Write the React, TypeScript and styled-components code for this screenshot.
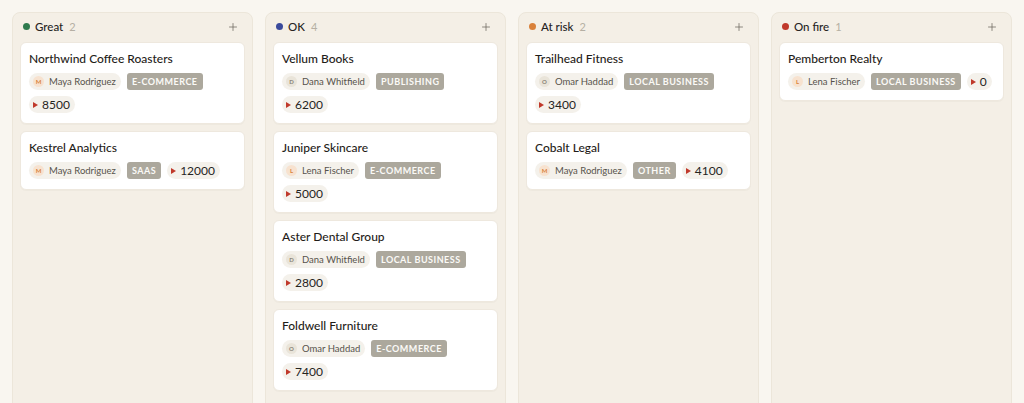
import React from 'react';
import styled, { createGlobalStyle } from 'styled-components';
import { Plus } from 'lucide-react';

type Owner = 'Maya Rodriguez' | 'Dana Whitfield' | 'Lena Fischer' | 'Omar Haddad';

type Deal = {
  name: string;
  owner: Owner;
  tag: string;
  value: number;
};

type Lane = {
  title: string;
  color: string;
  deals: Deal[];
};

const ownerTones: Record<Owner, { bg: string; fg: string }> = {
  'Maya Rodriguez': { bg: '#f7e2cf', fg: '#d9823b' },
  'Lena Fischer': { bg: '#f7e2cf', fg: '#d9823b' },
  'Dana Whitfield': { bg: '#e9e4d9', fg: '#8a8577' },
  'Omar Haddad': { bg: '#e9e4d9', fg: '#8a8577' },
};

const lanes: Lane[] = [
  {
    title: 'Great',
    color: '#2f7a4d',
    deals: [
      { name: 'Northwind Coffee Roasters', owner: 'Maya Rodriguez', tag: 'E-commerce', value: 8500 },
      { name: 'Kestrel Analytics', owner: 'Maya Rodriguez', tag: 'SaaS', value: 12000 },
    ],
  },
  {
    title: 'OK',
    color: '#3a4a9c',
    deals: [
      { name: 'Vellum Books', owner: 'Dana Whitfield', tag: 'Publishing', value: 6200 },
      { name: 'Juniper Skincare', owner: 'Lena Fischer', tag: 'E-commerce', value: 5000 },
      { name: 'Aster Dental Group', owner: 'Dana Whitfield', tag: 'Local business', value: 2800 },
      { name: 'Foldwell Furniture', owner: 'Omar Haddad', tag: 'E-commerce', value: 7400 },
    ],
  },
  {
    title: 'At risk',
    color: '#d9813a',
    deals: [
      { name: 'Trailhead Fitness', owner: 'Omar Haddad', tag: 'Local business', value: 3400 },
      { name: 'Cobalt Legal', owner: 'Maya Rodriguez', tag: 'Other', value: 4100 },
    ],
  },
  {
    title: 'On fire',
    color: '#c0392b',
    deals: [{ name: 'Pemberton Realty', owner: 'Lena Fischer', tag: 'Local business', value: 0 }],
  },
];

const GlobalStyle = createGlobalStyle`
  html, body {
    margin: 0;
    height: 100%;
    overflow: hidden;
    background: #f9f6f0;
    font-family: Lato, "Noto Sans", sans-serif;
    color: #26241f;
  }
  * { box-sizing: border-box; }
`;

const Board = styled.div`
  display: grid;
  grid-template-columns: repeat(4, 1fr);
  gap: 12px;
  padding: 12px 12px 0;
`;

const Column = styled.section`
  min-height: 420px;
  background: #f4efe6;
  border: 1px solid #ece6da;
  border-radius: 8px;
  padding: 0 7px 8px;
  display: flex;
  flex-direction: column;
`;

const Header = styled.div`
  display: flex;
  align-items: center;
  height: 27px;
  padding: 0 6px 0 3px;
  margin-bottom: 2px;
`;

const Dot = styled.span<{ color: string }>`
  width: 7px;
  height: 7px;
  border-radius: 50%;
  background: ${(p) => p.color};
  margin-right: 5px;
`;

const LaneTitle = styled.span`
  font-size: 11.5px;
  font-weight: 500;
  color: #26241f;
`;

const Count = styled.span`
  font-size: 11px;
  color: #b5afa3;
  margin-left: 6px;
  flex: 1;
`;

const AddButton = styled.button`
  border: none;
  background: none;
  padding: 0;
  display: flex;
  color: #6b675f;
`;

const Cards = styled.div`
  display: flex;
  flex-direction: column;
  gap: 7px;
`;

const Card = styled.article`
  background: #ffffff;
  border: 1px solid #eee8de;
  border-radius: 6px;
  padding: 8px 8px 10px;
  box-shadow: 0 1px 1px rgba(60, 50, 30, 0.03);
`;

const CardTitle = styled.div`
  font-size: 12px;
  font-weight: 500;
  line-height: 15px;
  margin-bottom: 7px;
  color: #1f1d19;
`;

const Meta = styled.div`
  display: flex;
  flex-wrap: wrap;
  gap: 6px;
`;

const Pill = styled.span`
  display: inline-flex;
  align-items: center;
  height: 17px;
  border-radius: 9px;
  background: #f4f1eb;
  padding: 0 5px 0 4px;
`;

const Avatar = styled.span<{ bg: string; fg: string }>`
  width: 11px;
  height: 11px;
  border-radius: 50%;
  background: ${(p) => p.bg};
  color: ${(p) => p.fg};
  font-size: 6px;
  font-weight: 700;
  display: inline-flex;
  align-items: center;
  justify-content: center;
  margin-right: 5px;
`;

const OwnerName = styled.span`
  font-size: 9.5px;
  color: #57534b;
`;

const Tag = styled.span`
  display: inline-flex;
  align-items: center;
  height: 17px;
  padding: 0 5px;
  border-radius: 3px;
  background: #aca89d;
  color: #fbfaf7;
  font-size: 9px;
  font-weight: 700;
  letter-spacing: 0.5px;
  text-transform: uppercase;
`;

const Arrow = styled.span`
  width: 0;
  height: 0;
  border-top: 3px solid transparent;
  border-bottom: 3px solid transparent;
  border-left: 5px solid #c0392b;
  margin-right: 4px;
`;

const Amount = styled.span`
  font-size: 12px;
  color: #26241f;
`;

const DealCard: React.FC<{ deal: Deal }> = ({ deal }) => {
  const tone = ownerTones[deal.owner];
  return (
    <Card>
      <CardTitle>{deal.name}</CardTitle>
      <Meta>
        <Pill>
          <Avatar bg={tone.bg} fg={tone.fg}>
            {deal.owner[0]}
          </Avatar>
          <OwnerName>{deal.owner}</OwnerName>
        </Pill>
        <Tag>{deal.tag}</Tag>
        <Pill>
          <Arrow />
          <Amount>{deal.value}</Amount>
        </Pill>
      </Meta>
    </Card>
  );
};

export default function App() {
  return (
    <>
      <GlobalStyle />
      <Board>
        {lanes.map((lane) => (
          <Column key={lane.title}>
            <Header>
              <Dot color={lane.color} />
              <LaneTitle>{lane.title}</LaneTitle>
              <Count>{lane.deals.length}</Count>
              <AddButton aria-label="Add">
                <Plus size={12} strokeWidth={1.5} />
              </AddButton>
            </Header>
            <Cards>
              {lane.deals.map((deal) => (
                <DealCard key={deal.name} deal={deal} />
              ))}
            </Cards>
          </Column>
        ))}
      </Board>
    </>
  );
}
